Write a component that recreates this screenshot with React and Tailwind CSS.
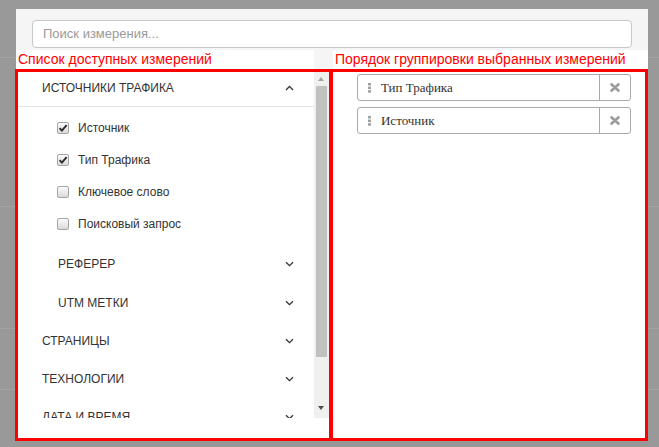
const sans = { fontFamily: '"Liberation Sans", Arial, sans-serif' };
const serif = { fontFamily: '"Liberation Serif", "Times New Roman", serif' };

function Chevron({ up }) {
  return (
    <svg width="9" height="6" viewBox="0 0 9 6" className="shrink-0">
      <polyline
        points={up ? "1,5 4.5,1.5 8,5" : "1,1.2 4.5,4.7 8,1.2"}
        fill="none"
        stroke="#333"
        strokeWidth="1.3"
      />
    </svg>
  );
}

function Checkbox({ checked }) {
  return (
    <div className="w-[12px] h-[12px] rounded-[2px] border border-[#a6a6a6] bg-linear-to-b from-[#fbfbfb] to-[#dadada] flex items-center justify-center shrink-0">
      {checked && (
        <svg width="10" height="10" viewBox="0 0 10 10">
          <path d="M1.6 5.2 L3.9 7.6 L8.6 2.2" fill="none" stroke="#2a2a2a" strokeWidth="1.9" />
        </svg>
      )}
    </div>
  );
}

function CheckRow({ label, checked }) {
  return (
    <div className="h-[32px] flex items-center pl-[39px] gap-[9px]">
      <Checkbox checked={checked} />
      <span className="text-[12px] text-[#333] leading-[16px]">{label}</span>
    </div>
  );
}

function GroupRow({ label, sub, h = "h-[38px]" }) {
  return (
    <div className={`${h} flex items-center justify-between pr-[20px] ${sub ? "pl-[40px]" : "pl-[24px]"}`}>
      <span className="text-[12px] text-[#333] leading-[16px]">{label}</span>
      <Chevron />
    </div>
  );
}

function SelectedItem({ label }) {
  return (
    <div className="h-[27px] w-[274px] flex border border-[#aaa] rounded-[3px] bg-white">
      <div className="flex-1 flex items-center pl-[10px]">
        <svg width="3" height="10" viewBox="0 0 3 10" className="shrink-0">
          <rect x="0" y="0" width="3" height="2.5" fill="#a0a0a0" />
          <rect x="0" y="3.6" width="3" height="2.5" fill="#a0a0a0" />
          <rect x="0" y="7.2" width="3" height="2.5" fill="#a0a0a0" />
        </svg>
        <span className="ml-[10px] text-[13px] text-[#333] leading-[16px]" style={serif}>
          {label}
        </span>
      </div>
      <div className="w-[31px] border-l border-[#aaa] flex items-center justify-center">
        <svg width="10" height="9" viewBox="0 0 10 9">
          <path d="M1.6 1.4 L8.4 7.6 M8.4 1.4 L1.6 7.6" stroke="#9c9c9c" strokeWidth="2.7" strokeLinecap="round" />
        </svg>
      </div>
    </div>
  );
}

export default function App() {
  const bgLines = [57, 206, 328, 389];
  return (
    <div className="relative w-[659px] h-[447px] bg-[#999999] overflow-hidden pt-[9px] pl-[16px]" style={sans}>
      {bgLines.map((y) => (
        <div key={y} className="absolute left-0 right-0 h-px bg-[#a3a3a3]" style={{ top: y }} />
      ))}
      <div className="relative w-[632px] h-[432px] bg-white flex flex-col">
        {/* header */}
        <div className="h-[41px] bg-[#f5f5f5] px-[16px] pt-[11px]">
          <div className="h-[28px] border border-[#c8c8c8] rounded-[4px] bg-white flex items-center px-[10px] text-[13px] text-[#999]">
            Поиск измерения...
          </div>
        </div>
        {/* labels */}
        <div className="h-[19px] bg-[#f5f5f5] flex">
          <div className="w-[298px] bg-white pl-[2px] text-[14px] leading-[19px] text-[#ff0000]">
            Список доступных измерений
          </div>
          <div className="ml-auto w-[315px] bg-white pl-[2px] text-[14px] leading-[19px] text-[#ff0000]">
            Порядок группировки выбранных измерений
          </div>
        </div>
        {/* body */}
        <div className="flex h-[372px] -ml-px">
          <div className="w-[318px] h-[372px] border-[3px] border-[#ff0000] flex flex-col bg-white">
            <div className="h-[346px] flex">
              <div className="flex-1 overflow-hidden">
                <div className="h-[35px] pt-[8px] pl-[24px] pr-[20px] flex items-start justify-between border-b border-[#e3e3e3]">
                  <span className="text-[12px] text-[#333] leading-[16px]">ИСТОЧНИКИ ТРАФИКА</span>
                  <div className="pt-[5px]">
                    <Chevron up />
                  </div>
                </div>
                <div className="pt-[5px]">
                  <CheckRow label="Источник" checked />
                  <CheckRow label="Тип Трафика" checked />
                  <CheckRow label="Ключевое слово" />
                  <CheckRow label="Поисковый запрос" />
                </div>
                <div className="pt-[5px]">
                  <GroupRow label="РЕФЕРЕР" sub />
                  <GroupRow label="UTM МЕТКИ" sub h="h-[39px]" />
                  <GroupRow label="СТРАНИЦЫ" />
                  <GroupRow label="ТЕХНОЛОГИИ" />
                  <GroupRow label="ДАТА И ВРЕМЯ" />
                </div>
              </div>
              {/* scrollbar */}
              <div className="w-[15px] bg-[#f0f0f0] flex flex-col">
                <div className="h-[14px] flex items-center justify-center">
                  <div className="w-0 h-0 border-l-[3.5px] border-r-[3.5px] border-b-[4px] border-l-transparent border-r-transparent border-b-[#a3a3a3]" />
                </div>
                <div className="flex-1">
                  <div className="mx-[2px] h-[271px] bg-[#c1c1c1]" />
                </div>
                <div className="h-[16px] flex items-start justify-center pt-[4px]">
                  <div className="w-0 h-0 border-l-[3.5px] border-r-[3.5px] border-t-[4px] border-l-transparent border-r-transparent border-t-[#505050]" />
                </div>
              </div>
            </div>
          </div>
          <div className="w-[319px] h-[372px] -ml-[2px] border-[3px] border-[#ff0000] bg-white pt-[2px] pl-[24px] flex flex-col gap-[6px]">
            <SelectedItem label="Тип Трафика" />
            <SelectedItem label="Источник" />
          </div>
        </div>
      </div>
    </div>
  );
}
